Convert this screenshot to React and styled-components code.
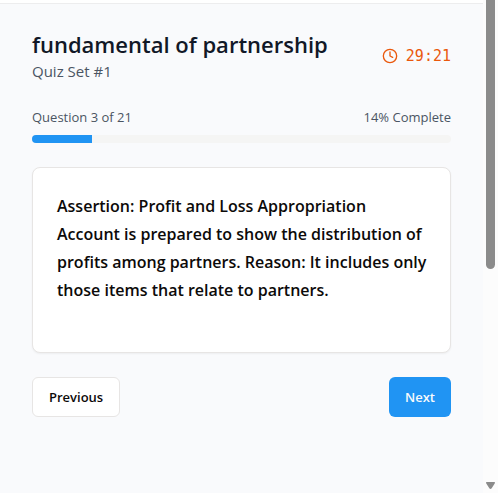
import React from "react";
import styled, { createGlobalStyle } from "styled-components";

const GlobalStyle = createGlobalStyle`
  *, *::before, *::after { box-sizing: border-box; }
  body {
    margin: 0;
    background: #f9fafc;
    color: #0c0a09;
    font-family: "Segoe UI", "Open Sans", "Noto Sans", sans-serif;
  }
`;

const Shell = styled.div`
  display: grid;
  grid-template-columns: 1fr 15px;
  height: 100vh;
  overflow: hidden;
`;

const Page = styled.div`
  min-width: 0;
`;

const NavEdge = styled.div`
  height: 4px;
  background: #fff;
  border-bottom: 1px solid #ededee;
`;

const Main = styled.main`
  display: flex;
  flex-direction: column;
  gap: 24px;
  padding: 24px 32px;
`;

const Header = styled.header`
  display: flex;
  align-items: center;
  justify-content: space-between;
`;

const Title = styled.h1`
  margin: 0;
  font-size: 22px;
  line-height: 32px;
  font-weight: 600;
  color: #111827;
`;

const Subtitle = styled.p`
  margin: 0;
  font-size: 15px;
  line-height: 23px;
  color: #4b5563;
`;

const Timer = styled.div`
  display: flex;
  align-items: center;
  gap: 8px;
  color: #ea580c;
  font-family: Consolas, "DejaVu Sans Mono", monospace;
  font-size: 15px;
  line-height: 24px;
`;

const Progress = styled.section`
  display: flex;
  flex-direction: column;
  gap: 8px;
`;

const ProgressLabels = styled.div`
  display: flex;
  justify-content: space-between;
  font-size: 13px;
  line-height: 20px;
  color: #4b5563;
`;

const Track = styled.div`
  height: 8px;
  border-radius: 4px;
  overflow: hidden;
  background: #f5f5f4;
`;

const Fill = styled.div`
  height: 100%;
  background: #2094f3;
`;

const Card = styled.section`
  padding: 24px 20px 48px 24px;
  background: #fff;
  border: 1px solid #e7e5e4;
  border-radius: 8px;
  box-shadow: 0 1px 2px rgba(0, 0, 0, 0.05);
`;

const Question = styled.p`
  margin: 0;
  font-size: 16px;
  line-height: 28px;
  font-weight: 600;
`;

const Actions = styled.div`
  display: flex;
  justify-content: space-between;
`;

const Button = styled.button`
  height: 40px;
  padding: 0 16px;
  font-family: inherit;
  font-size: 13px;
  line-height: 20px;
  font-weight: 600;
  border-radius: 6px;
  cursor: pointer;
  color: ${(p) => (p.$primary ? "#f8fafc" : "#0c0a09")};
  background: ${(p) => (p.$primary ? "#2094f3" : "#fff")};
  border: ${(p) => (p.$primary ? "none" : "1px solid #e7e5e4")};
`;

const Rail = styled.div`
  display: flex;
  flex-direction: column;
  align-items: center;
  justify-content: space-between;
  padding-bottom: 4px;
  background: #fcfcfc;
`;

const Thumb = styled.div`
  width: 9px;
  height: 55%;
  border-radius: 0 0 5px 5px;
  background: #8b8b8b;
`;

const ClockIcon = () => (
  <svg width="16" height="16" viewBox="0 0 24 24" fill="none" stroke="currentColor" strokeWidth="2" strokeLinecap="round" strokeLinejoin="round" aria-hidden="true">
    <circle cx="12" cy="12" r="10" />
    <polyline points="12 6 12 12 16 14" />
  </svg>
);

const DownArrow = () => (
  <svg width="9" height="7" viewBox="0 0 9 7" aria-hidden="true">
    <path d="M0.5 0H8.5Q9.3 0.6 8.7 1.5L5.7 6.2Q4.5 7.6 3.3 6.2L0.3 1.5Q-0.3 0.6 0.5 0Z" fill="#8b8b8b" />
  </svg>
);

const quiz = { current: 3, total: 21 };

export default function App() {
  const percent = (quiz.current / quiz.total) * 100;
  return (
    <Shell>
      <GlobalStyle />
      <Page>
        <NavEdge />
        <Main>
          <Header>
            <div>
              <Title>fundamental of partnership</Title>
              <Subtitle>Quiz Set #1</Subtitle>
            </div>
            <Timer>
              <ClockIcon />
              <span>29:21</span>
            </Timer>
          </Header>
          <Progress>
            <ProgressLabels>
              <span>Question {quiz.current} of {quiz.total}</span>
              <span>{Math.round(percent)}% Complete</span>
            </ProgressLabels>
            <Track role="progressbar" aria-label="Quiz progress" aria-valuenow={Math.round(percent)} aria-valuemin={0} aria-valuemax={100}>
              <Fill style={{ width: `${percent}%` }} />
            </Track>
          </Progress>
          <Card>
            <Question>
              Assertion: Profit and Loss Appropriation Account is prepared to show the distribution of profits among partners. Reason: It includes only those items that relate to partners.
            </Question>
          </Card>
          <Actions>
            <Button type="button">Previous</Button>
            <Button type="button" $primary>Next</Button>
          </Actions>
        </Main>
      </Page>
      <Rail aria-hidden="true">
        <Thumb />
        <DownArrow />
      </Rail>
    </Shell>
  );
}
